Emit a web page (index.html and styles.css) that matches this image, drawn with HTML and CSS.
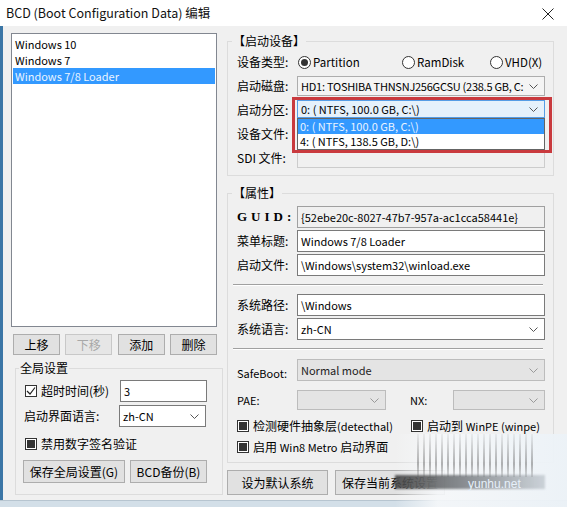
FILE: index.html
```html
<!DOCTYPE html>
<html lang="zh-CN">
<head>
    <meta charset="UTF-8">
    <title>BCD (Boot Configuration Data) 编辑</title>
    <link rel="stylesheet" href="styles.css">
</head>
<body>
<div class="window">
    <div class="titlebar">
        <span class="title">BCD (Boot Configuration Data) 编辑</span>
        <svg class="close" width="12" height="12" viewBox="0 0 12 12"><path d="M0.5 0.5L11.5 11.5M11.5 0.5L0.5 11.5"/></svg>
    </div>

    <div class="client">
        <!-- boot entries + global settings -->
        <div class="left">
            <ul class="entries">
                <li>Windows 10</li>
                <li>Windows 7</li>
                <li class="selected">Windows 7/8 Loader</li>
            </ul>
            <div class="entry-buttons">
                <button>上移</button>
                <button disabled>下移</button>
                <button>添加</button>
                <button>删除</button>
            </div>
            <fieldset class="group global">
                <legend>全局设置</legend>
                <div class="g-row timeout">
                    <span class="check"><span class="box checked"><svg width="10" height="10" viewBox="0 0 10 10"><path d="M1 5L4 8L9 1.5"/></svg></span><span>超时时间(秒)</span></span>
                    <span class="field small">3</span>
                </div>
                <div class="g-row lang">
                    <span class="g-label">启动界面语言:</span>
                    <span class="combo small white">zh-CN<svg class="chev" width="9" height="5" viewBox="0 0 9 5"><path d="M0.5 0.5L4.5 4.5L8.5 0.5"/></svg></span>
                </div>
                <div class="g-row nosign">
                    <span class="check"><span class="box mixed"></span><span>禁用数字签名验证</span></span>
                </div>
                <div class="g-row global-buttons">
                    <button class="save-global">保存全局设置(G)</button>
                    <button class="backup">BCD备份(B)</button>
                </div>
            </fieldset>
        </div>

        <!-- selected entry -->
        <div class="right">
            <fieldset class="group device">
                <legend>【启动设备】</legend>
                <div class="row">
                    <span class="label">设备类型:</span>
                    <span class="radios">
                        <span class="radio on"><span class="dot"></span>Partition</span>
                        <span class="radio ramdisk"><span class="dot"></span>RamDisk</span>
                        <span class="radio"><span class="dot"></span>VHD(X)</span>
                    </span>
                </div>
                <div class="row">
                    <span class="label">启动磁盘:</span>
                    <span class="combo light">HD1: TOSHIBA THNSNJ256GCSU (238.5 GB, C:<svg class="chev" width="9" height="5" viewBox="0 0 9 5"><path d="M0.5 0.5L4.5 4.5L8.5 0.5"/></svg></span>
                </div>
                <div class="row">
                    <span class="label">启动分区:</span>
                    <span class="popup-wrap">
                        <span class="combo focused">0: ( NTFS, 100.0 GB, C:\)<svg class="chev" width="9" height="5" viewBox="0 0 9 5"><path d="M0.5 0.5L4.5 4.5L8.5 0.5"/></svg></span>
                        <span class="dropdown">
                            <span class="option active">0: ( NTFS, 100.0 GB, C:\)</span>
                            <span class="option">4: ( NTFS, 138.5 GB, D:\)</span>
                        </span>
                        <span class="highlight"></span>
                    </span>
                </div>
                <div class="row">
                    <span class="label">设备文件:</span>
                    <span class="field off"></span>
                </div>
                <div class="row">
                    <span class="label">SDI 文件:</span>
                    <span class="field off"></span>
                </div>
            </fieldset>

            <fieldset class="group props">
                <legend>【属性】</legend>
                <div class="prow first">
                    <span class="label guid">GUID:</span>
                    <span class="field readonly">{52ebe20c-8027-47b7-957a-ac1cca58441e}</span>
                </div>
                <div class="prow">
                    <span class="label">菜单标题:</span>
                    <span class="field">Windows 7/8 Loader</span>
                </div>
                <div class="prow">
                    <span class="label">启动文件:</span>
                    <span class="field">\Windows\system32\winload.exe</span>
                </div>
                <div class="sep"></div>
                <div class="prow">
                    <span class="label">系统路径:</span>
                    <span class="field">\Windows</span>
                </div>
                <div class="prow">
                    <span class="label">系统语言:</span>
                    <span class="combo white">zh-CN<svg class="chev" width="9" height="5" viewBox="0 0 9 5"><path d="M0.5 0.5L4.5 4.5L8.5 0.5"/></svg></span>
                </div>
                <div class="sep"></div>
                <div class="prow safeboot">
                    <span class="label latin">SafeBoot:</span>
                    <span class="combo disabled">Normal mode<svg class="chev" width="9" height="5" viewBox="0 0 9 5"><path d="M0.5 0.5L4.5 4.5L8.5 0.5"/></svg></span>
                </div>
                <div class="prow pae">
                    <span class="label latin">PAE:</span>
                    <span class="combo disabled pae-box"><svg class="chev" width="9" height="5" viewBox="0 0 9 5"><path d="M0.5 0.5L4.5 4.5L8.5 0.5"/></svg></span>
                    <span class="label latin nx">NX:</span>
                    <span class="combo disabled nx-box"><svg class="chev" width="9" height="5" viewBox="0 0 9 5"><path d="M0.5 0.5L4.5 4.5L8.5 0.5"/></svg></span>
                </div>
                <div class="crow">
                    <span class="check hal"><span class="box mixed"></span><span>检测硬件抽象层<small>(detecthal)</small></span></span>
                    <span class="check"><span class="box mixed"></span><span>启动到 <small>WinPE (winpe)</small></span></span>
                </div>
                <div class="crow">
                    <span class="check"><span class="box mixed"></span><span>启用 <small>Win8 Metro</small> 启动界面</span></span>
                </div>
            </fieldset>

            <div class="actions">
                <button class="set-default">设为默认系统</button>
                <button class="save-current">保存当前系统设置</button>
            </div>
        </div>
    </div>
    <div class="bottom-edge"></div>

    <div class="watermark">
        <span class="wm-stripes"></span>
        <span class="wm-bar"></span>
        <span class="wm-text">yunhu.net</span>
    </div>
</div>
</body>
</html>
```

FILE: styles.css
```css
* {
    box-sizing: border-box;
}
body {
    margin: 0;
    font-family: "Noto Sans CJK SC", "Noto Sans", sans-serif;
    font-size: 12px;
    line-height: 18px;
    color: #000;
    background: #f0f0f0;
}
small {
    font-size: 11px;
}
.window {
    position: relative;
    width: 567px;
    height: 507px;
    display: flex;
    flex-direction: column;
    overflow: hidden;
    background: #f0f0f0;
}
.titlebar {
    height: 26px;
    background: #fff;
    display: flex;
    align-items: center;
    justify-content: space-between;
    padding: 0 13px 0 6px;
}
.title {
    font-size: 12.5px;
    color: #111;
}
.close {
    fill: none;
    stroke: #222;
    stroke-width: 1;
    margin-top: 1px;
}
.client {
    flex: 1;
    display: flex;
    padding: 6px 13px 0 0;
    border-left: 3px solid #3b76a6;
    gap: 3px;
}
.bottom-edge {
    height: 7px;
    background: #d3dfe8;
    border-top: 1px solid #b7c5d0;
}

/* left side */
.left {
    width: 221px;
    padding-left: 8px;
    margin-top: 1px;
    display: flex;
    flex-direction: column;
}
.entries {
    width: 206px;
    height: 294px;
    margin: 0;
    padding: 2px 1px;
    list-style: none;
    font-size: 11px;
    background: #fff;
    border: 1px solid #828790;
}
.entries li {
    height: 16px;
    line-height: 16px;
    padding-left: 2px;
}
.entries .selected {
    background: #3399ff;
    color: #eaf4ff;
}
.entry-buttons {
    width: 206px;
    display: flex;
    justify-content: space-between;
    margin-top: 7px;
    padding-left: 2px;
}
button {
    font: inherit;
    height: 21px;
    padding: 0;
    color: #000;
    background: #e1e1e1;
    border: 1px solid #adadad;
}
.entry-buttons button {
    width: 47px;
}
button:disabled {
    color: #a8a8a8;
    background: #e6e6e6;
    border-color: #c8c8c8;
}

.group {
    margin: 0;
    padding: 0;
    border: 1px solid #dcdcdc;
    min-width: 0;
}
.group legend {
    padding: 0 1px;
    line-height: 18px;
    height: 18px;
}
.global {
    width: 208px;
    margin: 4px 0 0 4px;
    padding: 3px 0 11px 9px;
}
.global legend {
    margin-left: -6px;
}
.g-row {
    display: flex;
    align-items: center;
}
.timeout {
    height: 22px;
}
.timeout .check {
    width: 95px;
}
.lang {
    height: 21px;
    margin-top: 3px;
}
.g-label {
    width: 95px;
    margin-left: -1px;
    padding-right: 1px;
}
.nosign {
    height: 20px;
    margin-top: 8px;
}
.global-buttons {
    margin: 6px 0 0 -2px;
    gap: 5px;
}
.global-buttons button {
    height: 23px;
}
.save-global {
    width: 102px;
}
.backup {
    width: 77px;
}

/* inputs */
.field,
.combo {
    display: flex;
    align-items: center;
    width: 248px;
    height: 22px;
    padding-left: 3px;
    font-size: 11px;
    white-space: nowrap;
    overflow: hidden;
    background: #fff;
    border: 1px solid #7a7a7a;
}
.field.small,
.combo.small {
    width: 87px;
}
.field.readonly {
    background: #f0f0f0;
    border-color: #a0a0a0;
}
.field.off {
    height: 20px;
    background: #f0f0f0;
    border-color: #cccccc;
}
.combo {
    position: relative;
    padding-right: 18px;
}
.combo.light {
    height: 20px;
    letter-spacing: -0.25px;
    background: #f4f4f4;
    border-color: #adadad;
}
.combo.focused {
    height: 18px;
    background: #e5f1fb;
    border-color: #569de5;
}
.combo.disabled {
    color: #222;
    background: #e4e4e4;
    border-color: #bcbcbc;
}
.chev {
    position: absolute;
    right: 6px;
    top: 50%;
    margin-top: -2px;
    fill: none;
    stroke: #555;
    stroke-width: 1;
}
.combo.disabled .chev {
    stroke: #999;
}

/* right side */
.right {
    width: 327px;
    display: flex;
    flex-direction: column;
}
.device {
    padding: 0 8px 5px 9px;
}
.device legend,
.props legend {
    margin-left: -5px;
}
.row {
    height: 24px;
    display: flex;
    align-items: center;
}
.label {
    width: 60px;
    flex: none;
    white-space: nowrap;
}
.label.latin {
    font-size: 11px;
}
.radios {
    display: flex;
    align-items: center;
    font-size: 11.5px;
}
.radio {
    display: flex;
    align-items: center;
    gap: 2px;
    width: 88px;
}
.radio.on {
    width: 104px;
    margin-left: 1px;
}
.dot {
    width: 13px;
    height: 13px;
    border: 1px solid #333;
    border-radius: 50%;
    background: #fff;
    display: flex;
    align-items: center;
    justify-content: center;
}
.radio.on .dot::after {
    content: "";
    width: 7px;
    height: 7px;
    border-radius: 50%;
    background: #333;
}
.popup-wrap {
    position: relative;
    align-self: flex-start;
    margin-top: 2px;
}
.dropdown {
    position: absolute;
    left: 0;
    top: 100%;
    width: 248px;
    font-size: 11px;
    background: #fff;
    border: 1px solid #646464;
    z-index: 2;
}
.option {
    display: block;
    height: 15px;
    line-height: 14px;
    padding-left: 2px;
}
.option.active {
    background: #3399ff;
    color: #eaf4ff;
}
.highlight {
    position: absolute;
    left: -5px;
    right: -7px;
    top: -3px;
    height: 56px;
    border: 3px solid #c93a3e;
    z-index: 3;
}

.props {
    margin-top: 8px;
    padding: 4px 8px 5px 9px;
}
.prow {
    display: flex;
    align-items: center;
    margin-top: 2px;
}
.prow.first {
    margin-top: 0;
}
.label.guid {
    font-family: "Liberation Serif", serif;
    font-size: 13px;
    font-weight: bold;
    letter-spacing: 4px;
}
.sep {
    height: 2px;
    margin: 8px 2px 8px -4px;
    border-top: 1px solid #a0a0a0;
    border-bottom: 1px solid #fff;
}
.sep + .prow {
    margin-top: 0;
}
.safeboot .label {
    padding-top: 6px;
}
.safeboot + .pae {
    margin-top: 8px;
}
.pae .combo {
    height: 20px;
}
.pae-box {
    width: 89px;
}
.label.nx {
    width: 43px;
    margin-left: 24px;
}
.nx-box {
    width: 92px;
}
.crow {
    display: flex;
    align-items: center;
    height: 20px;
    margin-top: 1px;
}
.pae + .crow {
    margin-top: 6px;
}
.check {
    display: flex;
    align-items: center;
    gap: 4px;
    white-space: nowrap;
}
.hal {
    width: 174px;
}
.box {
    width: 12px;
    height: 12px;
    border: 1px solid #333;
    background: #fff;
    display: flex;
    align-items: center;
    justify-content: center;
    flex: none;
}
.box.checked svg {
    fill: none;
    stroke: #222;
    stroke-width: 1.2;
}
.box.mixed::after {
    content: "";
    width: 8px;
    height: 8px;
    background: #333;
}
.actions {
    display: flex;
    gap: 7px;
    margin-top: 7px;
}
.actions button {
    height: 25px;
}
.set-default {
    width: 101px;
}
.save-current {
    width: 110px;
}

/* site watermark over the corner */
.watermark {
    position: absolute;
    right: 0;
    bottom: 0;
    width: 172px;
    height: 73px;
    background: linear-gradient(90deg, rgba(240, 240, 240, 0) 0, rgba(246, 248, 250, 0.9) 25%, rgba(236, 242, 247, 0.95) 100%);
}
.wm-stripes {
    position: absolute;
    left: 22px;
    top: 0;
    width: 120px;
    height: 43px;
    background: repeating-linear-gradient(90deg, rgba(90, 90, 90, 0.45) 0 2px, rgba(255, 255, 255, 0) 2px 6px);
    -webkit-mask-image: linear-gradient(180deg, rgba(0, 0, 0, 0.15), #000 70%, rgba(0, 0, 0, 0.4));
}
.wm-bar {
    position: absolute;
    left: 0;
    top: 41px;
    width: 150px;
    height: 14px;
    background: linear-gradient(90deg, rgba(70, 70, 70, 0.9), rgba(90, 95, 100, 0.7) 45%, rgba(140, 150, 160, 0.35));
    filter: blur(1px);
}
.wm-text {
    position: absolute;
    left: 73px;
    top: 43px;
    font-family: "Liberation Sans", sans-serif;
    font-size: 12px;
    line-height: 14px;
    color: #e6f0fa;
}
```
